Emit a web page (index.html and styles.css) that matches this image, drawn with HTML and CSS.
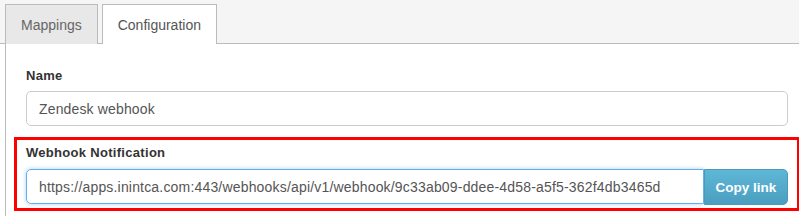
FILE: index.html
```html
<!DOCTYPE html>
<html>
<head>
<meta charset="utf-8">
<link rel="stylesheet" href="styles.css">
</head>
<body>
<div class="tabs">
  <div class="tab">Mappings</div>
  <div class="tab active">Configuration</div>
</div>
<div class="panel">
  <div class="field">
    <label class="label">Name</label>
    <div class="input">Zendesk webhook</div>
  </div>
  <div class="field highlight">
    <label class="label">Webhook Notification</label>
    <div class="group">
      <div class="input url">https://apps.inintca.com:443/webhooks/api/v1/webhook/9c33ab09-ddee-4d58-a5f5-362f4db3465d</div>
      <div class="btn">Copy link</div>
    </div>
  </div>
</div>
</body>
</html>
```

FILE: styles.css
```css
* { box-sizing: border-box; }
html, body { margin: 0; padding: 0; background: #fff; }
body {
  font-family: "Liberation Sans", Arial, sans-serif;
  color: #333;
  width: 799px;
  height: 216px;
  overflow: hidden;
}
.tabs {
  display: flex;
  gap: 4px;
  background: #f5f5f5;
  padding: 4px 0 0 5px;
  height: 44px;
  border-bottom: 1px solid #bbb;
}
.tab {
  height: 40px;
  padding: 0 15px;
  display: flex;
  align-items: center;
  font-size: 14px;
  color: #666;
  background: #e8e8e8;
  border: 1px solid #bbb;
  border-bottom: none;
}
.tab.active {
  background: #fff;
  color: #555;
  margin-bottom: -1px;
}
.panel {
  margin-left: 5px;
  border-left: 1px solid #bbb;
  padding: 24px 10px 0 8px;
  height: 172px;
}
.field {
  padding: 0 0 0 12px;
}
.label {
  display: block;
  font-weight: bold;
  font-size: 13px;
  letter-spacing: 0.3px;
  color: #333;
  line-height: 15px;
  margin-bottom: 8px;
}
.input {
  height: 35px;
  width: 762px;
  border: 1px solid #ccc;
  border-radius: 5px;
  padding: 0 12px;
  display: flex;
  align-items: center;
  font-size: 14px;
  letter-spacing: 0.15px;
  color: #555;
  white-space: nowrap;
}
.highlight {
  margin-top: 11px;
  margin-right: -11px;
  border: 3px solid #f00;
  padding: 5px 0 3px 9px;
}
.highlight .label { margin-bottom: 9px; }
.group {
  display: flex;
  width: 762px;
}
.input.url {
  width: auto;
  flex: 1;
  border-color: #66afe9;
  border-radius: 5px 0 0 5px;
  box-shadow: 0 0 4px rgba(102, 175, 233, 0.6);
  letter-spacing: 0.18px;
}
.btn {
  width: 84px;
  height: 36px;
  background: linear-gradient(#5fb6d7, #4a9fc0);
  border: 1px solid #4a9bb9;
  border-radius: 0 5px 5px 0;
  color: #fff;
  font-weight: bold;
  font-size: 13.5px;
  display: flex;
  align-items: center;
  justify-content: center;
}
```
